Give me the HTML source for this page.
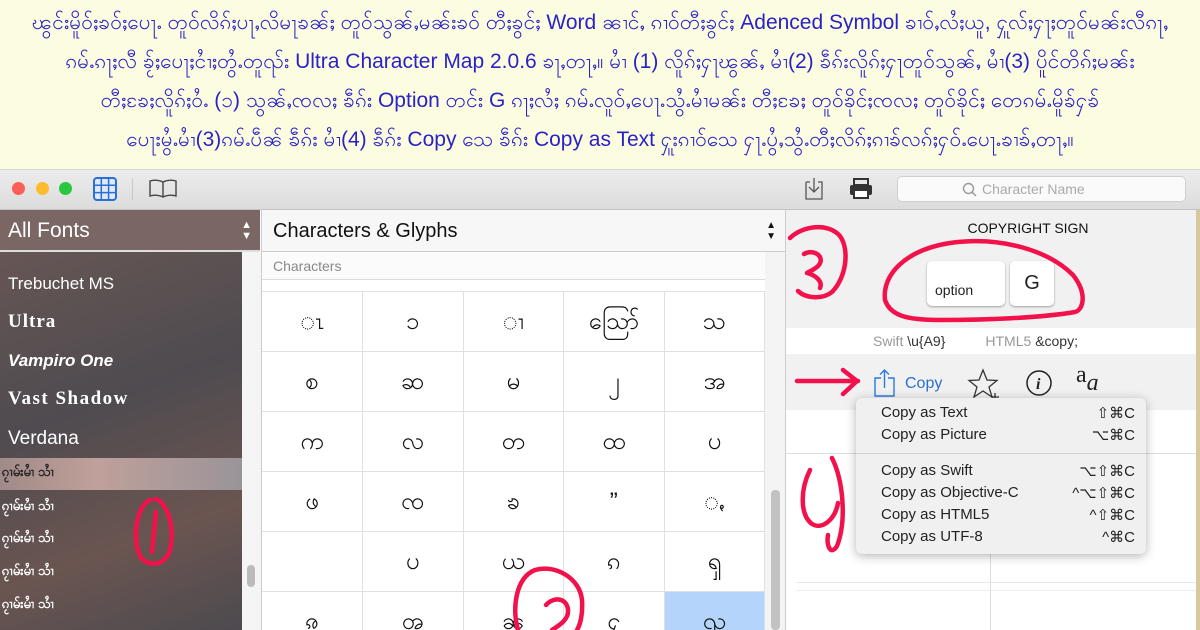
<!DOCTYPE html>
<html><head><meta charset="utf-8">
<style>
*{margin:0;padding:0;box-sizing:border-box}
body{width:1200px;height:630px;overflow:hidden;position:relative;font-family:"Liberation Sans",sans-serif;background:#fff}
.abs{position:absolute}
#banner{left:0;top:0;width:1200px;height:170px;background:#fcfde0;color:#2a22c8;font-size:21px;text-align:center;border-bottom:1px solid #d8d8c8;overflow:hidden}
#banner div{position:absolute;left:-50px;width:1300px;white-space:nowrap;overflow:hidden}
#title{left:0;top:170px;width:1200px;height:40px;background:linear-gradient(#ececec,#dcdcdc);border-bottom:1px solid #c4c4c4}
.dot{position:absolute;top:182px;width:13px;height:13px;border-radius:50%}
#side{left:0;top:210px;width:242px;height:420px;background:linear-gradient(160deg,#6b5955 0%,#4f4b50 45%,#6a5550 75%,#4d4a4f 100%)}
#sidehead{left:0;top:210px;width:260px;height:42px;background:#7a6662;color:#fff;font-size:21px;line-height:42px;padding-left:8px;border-bottom:2px solid #ddd}
.fi{position:absolute;left:8px;color:#fff}
.my{position:absolute;left:2px;color:#fff;font-size:13px;font-weight:bold}
#mid{left:261px;top:210px;width:524px;height:420px;background:#fff;border-left:1px solid #ccc;overflow:hidden}
.cell{position:absolute;width:101px;height:60px;border-right:1px solid #e0e0e0;border-bottom:1px solid #e0e0e0;text-align:center;line-height:60px;font-size:24px;color:#111}
#right{left:785px;top:210px;width:415px;height:420px;background:#f1f1f1;border-left:1px solid #ccc}
.key{position:absolute;background:#fff;border-radius:5px;box-shadow:0 1px 2px rgba(0,0,0,.35);color:#222}
#menu{left:856px;top:398px;width:290px;height:156px;background:#f0f0f0;border-radius:6px;box-shadow:0 2px 10px rgba(0,0,0,.3);font-size:15px;color:#222}
.mi{position:absolute;left:25px;width:254px}
.mi span{position:absolute;right:0}
</style></head><body>
<div id="banner" class="abs">
<div style="top:9px">ၽွင်းမိူဝ်ႈၶဝ်ႈပေႃႉ တူဝ်လိၵ်ႈပႃႇလိမႃၶၼ်ႈ တူဝ်သွၼ်ႇမၼ်းၶဝ် တီႈၶွင်ႈ Word ၼၢင်ႇ ၵၢဝ်တီႈၶွင်ႈ Adenced Symbol ၶၢဝ်ႇလႆႈယူ, ႁူလ်ႈႁႃႈတူဝ်မၼ်းလီၵႃႇ</div>
<div style="top:48px">ၵမ်ႉၵႃႈလီ ၶႂ်ႈပေႃႈငၢႆႈတွႆႉတူၺ်း Ultra Character Map 2.0.6 ၶႃႇတႃႇ။ မၢႆ (1) လိူၵ်ႈႁႃၽွၼ်ႇ မၢႆ(2) ၶဵၵ်းလိူၵ်ႈႁႃတူဝ်သွၼ်ႇ မၢႆ(3) ပိူင်တိၵ်ႈမၼ်း</div>
<div style="top:87px">တီႈၶႄႈလိူၵ်ႈဝႆႉ  (၁) သွၼ်ႇၸလႈ ၶဵၵ်း Option တင်း G ၵႃႈလႆႈ ၵမ်ႉလူဝ်ႇပေႃႉသွႆႉမၢႆမၼ်း တီႈၶႄႈ တူဝ်ၶိုင်ႈၸလႈ တူဝ်ၶိုင်ႈ တေၵမ်ႉမိူၶ်ႁၶ်</div>
<div style="top:126px">ပေႃးမွႆႉမၢႆ(3)ၵမ်ႉပဵၼ် ၶဵၵ်း မၢႆ(4) ၶဵၵ်း Copy သေ ၶဵၵ်း Copy as Text  ႁူးၵၢဝ်သေ ႁႃႉပွႆႇသွႆႉတီႈလိၵ်ႈၵၢၶ်လၵ်ႈႁဝ်ႉပေႃႉၶၢၶ်ႇတႃႇ။</div>
</div>
<div id="title" class="abs"></div>
<div class="dot" style="left:12px;background:#fc5f57"></div>
<div class="dot" style="left:36px;background:#fdbc2e"></div>
<div class="dot" style="left:59px;background:#29c840"></div>
<svg class="abs" style="left:92px;top:176px" width="26" height="26"><rect x="2" y="2" width="22" height="22" rx="3" fill="#dfe9f8" stroke="#2a6fd6" stroke-width="2"/><path d="M2 9.3H24M2 16.6H24M9.3 2V24M16.6 2V24" stroke="#2a6fd6" stroke-width="1.5"/></svg>
<div class="abs" style="left:132px;top:178px;width:1px;height:22px;background:#c8c8c8"></div>
<svg class="abs" style="left:148px;top:177px" width="30" height="22"><path d="M2 4Q8 2 15 5Q22 2 28 4V19Q22 17 15 20Q8 17 2 19Z M15 5V20" fill="none" stroke="#444" stroke-width="1.4"/></svg>
<svg class="abs" style="left:802px;top:176px" width="24" height="26"><path d="M4 6V23H20V6H16M8 6H4" fill="none" stroke="#555" stroke-width="1.3"/><path d="M12 2V16M7 11L12 16L17 11" fill="none" stroke="#555" stroke-width="1.3"/></svg>
<svg class="abs" style="left:848px;top:177px" width="26" height="24"><rect x="6" y="2" width="14" height="6" fill="none" stroke="#333" stroke-width="2"/><rect x="2" y="8" width="22" height="10" rx="2" fill="#333"/><rect x="6" y="13" width="14" height="8" fill="#fff" stroke="#333" stroke-width="2"/></svg>
<div class="abs" style="left:897px;top:176px;width:289px;height:26px;background:#fafafa;border:1px solid #d0d0d0;border-radius:5px;color:#aaa;font-size:14px;line-height:24px;padding-left:84px">
<svg style="position:absolute;left:64px;top:5px" width="16" height="16"><circle cx="6.5" cy="6.5" r="5" fill="none" stroke="#999" stroke-width="1.4"/><path d="M10 10L14 14" stroke="#999" stroke-width="1.5"/></svg>Character Name</div>

<div id="side" class="abs"></div>
<div class="abs" style="left:242px;top:252px;width:19px;height:378px;background:#f5f5f5"></div>
<div class="abs" style="left:247px;top:565px;width:8px;height:22px;background:#bbb;border-radius:4px"></div>
<div id="sidehead" class="abs">All Fonts<span style="position:absolute;right:8px;font-size:11px;line-height:11px;top:10px">▲<br>▼</span></div>
<div class="fi" style="top:274px;font-size:17px">Trebuchet MS</div>
<div class="fi" style="top:311px;font-size:19px;font-weight:bold;font-family:'Liberation Serif',serif;letter-spacing:1px">Ultra</div>
<div class="fi" style="top:351px;font-size:17px;font-style:italic;font-weight:bold">Vampiro One</div>
<div class="fi" style="top:388px;font-size:19px;font-weight:bold;font-family:'Liberation Serif',serif;letter-spacing:1.5px">Vast Shadow</div>
<div class="fi" style="top:428px;font-size:19px">Verdana</div>
<div class="abs" style="left:0;top:458px;width:242px;height:32px;background:linear-gradient(90deg,#a08a88,#c0a09a 40%,#9a9499)"></div>
<div class="my" style="top:464px;color:#222">ၵႂၢမ်းမၢႆ သၢႆ</div>
<div class="my" style="top:498px">ၵႂၢမ်းမၢႆ သၢႆ</div>
<div class="my" style="top:530px">ၵႂၢမ်းမၢႆ သၢႆ</div>
<div class="my" style="top:563px">ၵႂၢမ်းမၢႆ သၢႆ</div>
<div class="my" style="top:596px">ၵႂၢမ်းမၢႆ သၢႆ</div>

<div id="mid" class="abs">
<div style="position:absolute;left:0;top:0;width:523px;height:42px;background:#f7f7f7;border-bottom:1px solid #ccc;font-size:20px;line-height:42px;padding-left:11px;color:#111">Characters &amp; Glyphs<span style="position:absolute;right:9px;top:10px;font-size:10px;line-height:11px">▲<br>▼</span></div>
<div style="position:absolute;left:0;top:42px;width:503px;height:28px;background:#fbfbfb;border-bottom:1px solid #ddd;font-size:14px;line-height:28px;padding-left:11px;color:#888">Characters</div>
<div style="position:absolute;left:0;top:70px;width:503px;height:12px;border-bottom:1px solid #e0e0e0"></div>
<div style="position:absolute;left:503px;top:42px;width:20px;height:378px;background:#f4f4f4"></div>
<div style="position:absolute;left:509px;top:280px;width:9px;height:140px;background:#c2c2c2;border-radius:4px"></div>
<div style="position:absolute;left:402px;top:382px;width:101px;height:38px;background:#b5d4fb"></div>
<div id="cells"></div>
</div>
<script>
var g=[["ၤ","ၥ","ၢ","ဪ","သ"],["စ","ဆ","မ","၂","အ"],["က","လ","တ","ထ","ပ"],["ဖ","ၸ","ၶ","”","ꩻ"],["","ပ","ယ","ၵ","ၡ"],["ၷ","ၻ","ၼ","ႁ","ၺ"]];
var h="";for(var r=0;r<6;r++)for(var c=0;c<5;c++){h+='<div class="cell" style="left:'+(c*100.6)+'px;top:'+(82+r*60)+'px">'+g[r][c]+'</div>';}
document.getElementById("cells").innerHTML=h;
</script>

<div id="right" class="abs"></div>
<div class="abs" style="left:786px;top:220px;width:414px;text-align:center;font-size:14px;color:#111;padding-left:70px">COPYRIGHT SIGN</div>
<div class="key" style="left:927px;top:261px;width:78px;height:45px;font-size:14px;padding:21px 0 0 8px">option</div>
<div class="key" style="left:1010px;top:261px;width:44px;height:45px;font-size:20px;text-align:center;line-height:45px">G</div>
<div class="abs" style="left:786px;top:328px;width:414px;height:26px;background:#fff;font-size:14px;line-height:26px;color:#999;padding-left:87px">Swift <span style="color:#333">\u{A9}</span><span style="margin-left:40px">HTML5</span> <span style="color:#333">&amp;copy;</span></div>
<svg class="abs" style="left:872px;top:368px" width="26" height="30"><path d="M9 10H3V28H22V10H16" fill="none" stroke="#2a7ae0" stroke-width="1.4"/><path d="M12.5 2V20M8 6.5L12.5 2L17 6.5" fill="none" stroke="#2a7ae0" stroke-width="1.4"/></svg>
<div class="abs" style="left:905px;top:375px;font-size:16px;color:#2a6fd6">Copy</div>
<svg class="abs" style="left:966px;top:368px" width="40" height="34"><path d="M17 2L21 12L31 12.5L23 19L26 29L17 23L8 29L11 19L3 12.5L13 12Z" fill="none" stroke="#333" stroke-width="1.3"/><path d="M29 25V33M25 29H33" stroke="#333" stroke-width="1.3"/></svg>
<svg class="abs" style="left:1025px;top:369px" width="28" height="28"><circle cx="14" cy="14" r="12" fill="none" stroke="#222" stroke-width="1.5"/><text x="11" y="20" font-family="Liberation Serif" font-style="italic" font-weight="bold" font-size="16" fill="#222">i</text></svg>
<div class="abs" style="left:1076px;top:362px;font-family:'Liberation Serif',serif;font-size:24px;color:#222">a<span style="font-style:italic;font-size:24px;position:relative;top:8px">a</span></div>
<div class="abs" style="left:786px;top:410px;width:414px;height:220px;background:#fff"></div>
<div class="abs" style="left:786px;top:453px;width:414px;height:1px;background:#ddd"></div>
<div class="abs" style="left:990px;top:453px;width:1px;height:177px;background:#ddd"></div>
<div class="abs" style="left:796px;top:582px;width:404px;height:1px;background:#e8e8e8"></div>
<div class="abs" style="left:796px;top:590px;width:404px;height:1px;background:#eee"></div>
<div class="abs" style="left:1196px;top:210px;width:4px;height:420px;background:#d8c8a0"></div>
<div id="menu" class="abs">
<div class="mi" style="top:6px">Copy as Text<span>⇧⌘C</span></div>
<div class="mi" style="top:28px">Copy as Picture<span>⌥⌘C</span></div>
<div style="position:absolute;left:0;top:55px;width:290px;height:1px;background:#d0d0d0"></div>
<div class="mi" style="top:64px">Copy as Swift<span>⌥⇧⌘C</span></div>
<div class="mi" style="top:86px">Copy as Objective-C<span>^⌥⇧⌘C</span></div>
<div class="mi" style="top:108px">Copy as HTML5<span>^⇧⌘C</span></div>
<div class="mi" style="top:130px">Copy as UTF-8<span>^⌘C</span></div>
</div>

<svg class="abs" style="left:0;top:0" width="1200" height="630">
<g fill="none" stroke="#f2114b" stroke-width="4.5" stroke-linecap="round" stroke-linejoin="round">
<path d="M150 500C136 506 132 540 140 556C148 568 165 566 170 550C175 528 168 502 155 499M156 512L152 552"/>
<path d="M518 630C512 610 515 578 535 570C555 564 580 578 582 600C583 615 580 625 577 630M546 605C554 596 567 598 568 610C569 620 558 626 552 630"/>
<path d="M790 238C802 226 828 222 840 236C850 250 846 278 832 292C822 300 805 298 798 291M804 254C815 248 826 258 818 266C814 270 808 272 807 273C815 275 823 281 820 288"/>
<path d="M885 300C882 275 905 250 950 243C1000 236 1048 250 1073 275C1088 294 1083 310 1075 312C1040 318 985 320 940 320C905 320 890 315 885 300"/>
<path d="M797 381H858M843 370L857 381L843 394"/>
<path d="M810 470C800 490 800 515 812 524C822 530 835 520 838 503M832 458C843 480 847 520 837 546C831 556 826 546 828 535"/>
</g></svg>
</body></html>
